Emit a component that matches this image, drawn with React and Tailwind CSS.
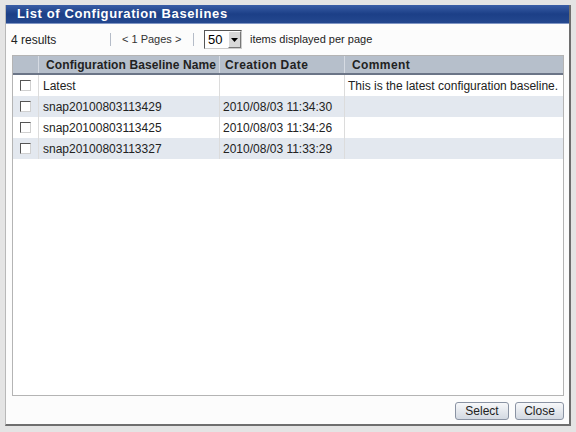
import React from 'react';

const ROWS = [
    { name: 'Latest', date: '', comment: 'This is the latest configuration baseline.' },
    { name: 'snap20100803113429', date: '2010/08/03 11:34:30', comment: '' },
    { name: 'snap20100803113425', date: '2010/08/03 11:34:26', comment: '' },
    { name: 'snap20100803113327', date: '2010/08/03 11:33:29', comment: '' },
];

function Checkbox() {
    return (
        <span className="block w-[11px] h-[11px] bg-white border border-t-[#555] border-l-[#555] border-r-[#d0d0d0] border-b-[#d0d0d0]" />
    );
}

function Button({ children, width }) {
    return (
        <button className={`${width} h-[18px] rounded-[3px] border border-[#8a93a3] bg-gradient-to-b from-[#f7f8fa] to-[#d3d9e2] text-[12px] text-[#222] leading-none`}>
            {children}
        </button>
    );
}

export default function App() {
    return (
        <div
            className="w-[576px] h-[432px] bg-[#e4e4e4] p-[5px]"
            style={{ fontFamily: "'Liberation Sans', Arial, sans-serif" }}
        >
            <div className="w-[566px] h-[421px] flex flex-col bg-[#fcfcfc] border-l border-l-[#b8b8b8] border-r-2 border-r-[#6e6e6e] border-b-2 border-b-[#6e6e6e]">
                {/* Title bar */}
                <div className="h-[19px] shrink-0 flex items-center px-[11px] bg-gradient-to-b from-[#3a5ea6] via-[#1c3f87] to-[#24488f] border-b border-b-[#7f95c4]">
                    <span className="text-white text-[13px] font-bold tracking-[0.6px]">List of Configuration Baselines</span>
                </div>

                {/* Toolbar */}
                <div className="h-[31px] shrink-0 flex items-center text-[12px] text-[#222] pl-[5px]">
                    <span className="w-[99px]">4 results</span>
                    <span className="w-px h-[13px] bg-[#b5bcc8]" />
                    <span className="ml-[11px] w-[71px] text-[11px] text-[#333]">&lt; 1 Pages &gt;</span>
                    <span className="w-px h-[13px] bg-[#b5bcc8]" />
                    <div className="ml-[10px] w-[38px] h-[19px] flex items-stretch border border-t-[#555] border-l-[#555] border-r-[#ccc] border-b-[#ccc] bg-white">
                        <span className="flex-1 pl-[3px] text-[13px] leading-[17px] text-black">50</span>
                        <span className="w-[13px] flex items-center justify-center bg-[#d8d8d8] border border-t-[#fff] border-l-[#fff] border-r-[#777] border-b-[#777]">
                            <svg width="7" height="4" viewBox="0 0 7 4"><path d="M0 0h7L3.5 4z" fill="#000" /></svg>
                        </span>
                    </div>
                    <span className="ml-[8px] text-[11px]">items displayed per page</span>
                </div>

                {/* Table */}
                <div className="ml-[6px] mr-[5px] h-[341px] shrink-0 border border-[#b4b4b4] bg-white">
                    <div className="flex h-[19px] bg-[#b6bfcb] border-b-2 border-b-[#6b7587] text-[12px] font-bold text-[#222] whitespace-nowrap">
                        <div className="w-[26px] border-r border-r-[#d6dbe3]" />
                        <div className="w-[181px] pl-[7px] flex items-center border-r border-r-[#d6dbe3] tracking-[0.1px]">Configuration Baseline Name</div>
                        <div className="w-[125px] pl-[5px] flex items-center border-r border-r-[#d6dbe3] tracking-[0.4px]">Creation Date</div>
                        <div className="flex-1 pl-[7px] flex items-center tracking-[0.4px]">Comment</div>
                    </div>
                    {ROWS.map((r, i) => (
                        <div
                            key={r.name}
                            className={`flex h-[21px] text-[12px] text-[#222] ${i % 2 === 1 ? 'bg-[#e3e8ef]' : 'bg-white'}`}
                        >
                            <div className="w-[26px] flex items-center justify-center border-r border-r-[#dcdcdc]">
                                <Checkbox />
                            </div>
                            <div className="w-[181px] pl-[4px] flex items-center border-r border-r-[#dcdcdc]">{r.name}</div>
                            <div className="w-[125px] pl-[3px] flex items-center border-r border-r-[#dcdcdc]">{r.date}</div>
                            <div className="flex-1 pl-[3px] flex items-center">{r.comment}</div>
                        </div>
                    ))}
                </div>

                {/* Buttons */}
                <div className="flex-1 flex items-start justify-end gap-[6px] pt-[6px] pr-[5px]">
                    <Button width="w-[54px]">Select</Button>
                    <Button width="w-[49px]">Close</Button>
                </div>
            </div>
        </div>
    );
}
